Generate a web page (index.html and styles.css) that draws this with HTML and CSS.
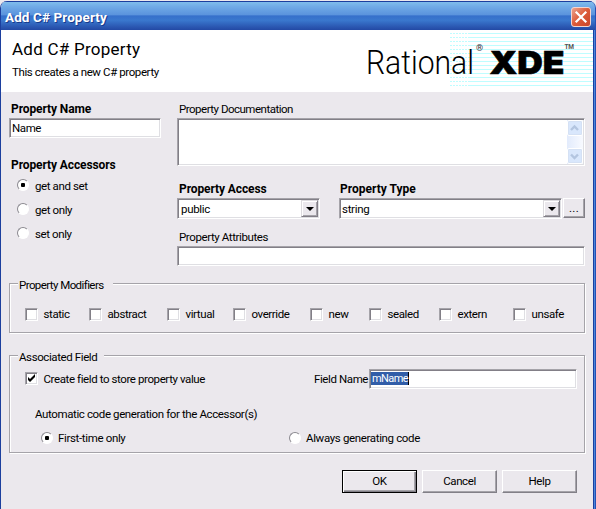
FILE: index.html
```html
<!DOCTYPE html>
<html lang="en">
<head>
<meta charset="utf-8">
<title>Add C# Property</title>
<link rel="stylesheet" href="styles.css">
</head>
<body>
<div class="window">
  <div class="titlebar">
    <span class="title">Add C# Property</span>
    <span class="close"><svg width="18" height="18" viewBox="0 0 18 18"><path d="M4.500 4.500l9 9M13.500 4.500l-9 9" stroke="#fff" stroke-width="2.200" stroke-linecap="square"/></svg></span>
  </div>
  <div class="header">
    <div class="intro">
      <div class="heading">Add C# Property</div>
      <div class="sub">This creates a new C# property</div>
    </div>
    <div class="logo">
      <svg width="230" height="62" viewBox="0 0 230 62">
        <path d="M87 3.500H105M87 7.500H105M87 11.500H105M87 15.500H105M87 19.500H105M87 23.500H105M87 27.500H105M87 31.500H105M87 35.500H105M87 39.500H105M87 43.500H105M87 47.500H105M87 51.500H105M87 55.500H105" stroke="#bffdff" stroke-dasharray="2 1"/>
        <path d="M105 3.500H230M105 7.500H230M105 11.500H230M105 15.500H230M105 19.500H230M105 23.500H230M105 27.500H230M105 31.500H230M105 35.500H230M105 39.500H230M105 43.500H230M105 47.500H230M105 51.500H230M105 55.500H230" stroke="#bffdff"/>
        <text x="3" y="44"><tspan class="rational" textLength="108" lengthAdjust="spacingAndGlyphs">Rational</tspan><tspan class="mark" x="113" y="21">®</tspan></text>
        <text class="xde" x="126.500" y="43.500" textLength="75" lengthAdjust="spacingAndGlyphs">XDE</text>
        <text class="tm" x="201.500" y="19" textLength="9" lengthAdjust="spacingAndGlyphs">TM</text>
      </svg>
    </div>
  </div>
  <div class="content">
    <div class="columns">
      <div class="left">
        <div class="label bold name-label">Property Name</div>
        <div class="field">Name</div>
        <div class="label bold acc-label">Property Accessors</div>
        <div class="radio-row"><i class="radio on"></i><span>get and set</span></div>
        <div class="radio-row"><i class="radio"></i><span>get only</span></div>
        <div class="radio-row"><i class="radio"></i><span>set only</span></div>
      </div>
      <div class="right">
        <div class="label doc-label">Property Documentation</div>
        <div class="textarea">
          <div class="scroll">
            <span class="sbtn"><svg width="15" height="16"><path d="M4 10l3.500-3.500L11 10" fill="none" stroke="#b3c5e0" stroke-width="2.400"/></svg></span>
            <span class="sbtn"><svg width="15" height="16"><path d="M4 6.500l3.500 3.500L11 6.500" fill="none" stroke="#b3c5e0" stroke-width="2.400"/></svg></span>
          </div>
        </div>
        <div class="pair">
          <div class="access">
            <div class="label bold access-label">Property Access</div>
            <div class="field combo"><span>public</span><span class="arrow"><i></i></span></div>
          </div>
          <div class="type">
            <div class="label bold type-label">Property Type</div>
            <div class="field combo"><span>string</span><span class="arrow"><i></i></span></div>
          </div>
          <div class="dots">...</div>
        </div>
        <div class="label attr-label">Property Attributes</div>
        <div class="field"></div>
      </div>
    </div>

    <div class="group modifiers">
      <div class="legend"><span class="mod-text">Property Modifiers</span></div>
      <div class="checks">
        <div class="check-row"><i class="check"></i><span>static</span></div>
        <div class="check-row"><i class="check"></i><span>abstract</span></div>
        <div class="check-row"><i class="check"></i><span>virtual</span></div>
        <div class="check-row"><i class="check"></i><span>override</span></div>
        <div class="check-row"><i class="check"></i><span>new</span></div>
        <div class="check-row"><i class="check"></i><span>sealed</span></div>
        <div class="check-row"><i class="check"></i><span>extern</span></div>
        <div class="check-row"><i class="check"></i><span>unsafe</span></div>
      </div>
    </div>

    <div class="group associated">
      <div class="legend"><span class="assoc-text">Associated Field</span></div>
      <div class="create">
        <div class="check-row"><i class="check"><svg width="9" height="9" viewBox="0 0 9 9"><path d="M1 3v3l2 2 5-5V0L3 5z" fill="#000"/></svg></i><span class="create-text">Create field to store property value</span></div>
        <span class="fname">Field Name</span>
        <div class="field fbox"><span class="selected">mName</span></div>
      </div>
      <div class="auto">Automatic code generation for the Accessor(s)</div>
      <div class="gen">
        <div class="radio-row"><i class="radio on"></i><span>First-time only</span></div>
        <div class="radio-row"><i class="radio"></i><span>Always generating code</span></div>
      </div>
    </div>

    <div class="buttons">
      <div class="button default">OK</div>
      <div class="button">Cancel</div>
      <div class="button">Help</div>
    </div>
  </div>
</div>
</body>
</html>
```
FILE: styles.css
```css
* { box-sizing: border-box; }
body {
  margin: 0;
  width: 596px;
  height: 509px;
  overflow: hidden;
  padding-top: 1px;
  background: #ebe8ed;
  font: 11.5px/14px Roboto, "Liberation Sans", sans-serif;
  letter-spacing: -0.4px;
  color: #000;
  white-space: nowrap;
}
.window {
  height: 508px;
  border-left: 1px solid #1c3f9e;
  border-right: 1px solid #2450b4;
  border-radius: 7px 7px 0 0;
  box-shadow: inset -1px 0 #4a86dc, inset -2px 0 #1c3f9e;
  padding-right: 2px;
  overflow: hidden;
}
.titlebar {
  height: 29px;
  margin-right: -2px;
  display: flex;
  align-items: center;
  justify-content: space-between;
  padding: 2px 4px 0 4px;
  border-top: 1px solid #1c3f9e;
  background: linear-gradient(#7fbdec 0, #6fa9e6 18%, #5b94dd 45%, #3670cb 50%, #3a78ce 65%, #2b58b2 88%, #2349a4 100%);
}
.title {
  color: #fff;
  font: bold 13.5px/18px Roboto, sans-serif;
  letter-spacing: 0.1px;
  text-shadow: 1px 1px #173a8c;
}
.close {
  width: 20px;
  height: 20px;
  border: 1px solid #f4d5cf;
  border-radius: 3px;
  background: linear-gradient(135deg, #eba38f, #dc5a38 50%, #c9452a);
}
.close svg { display: block; }
.header {
  height: 62px;
  background: #fff;
  display: flex;
  justify-content: space-between;
}
.intro { padding: 9px 0 0 11px; }
.heading { font-size: 17px; line-height: 20px; letter-spacing: 0.25px; }
.sub { margin-top: 6px; }
.logo svg { display: block; }
.rational { font: 300 33px Roboto, sans-serif; letter-spacing: 0; }
.xde { font: 900 32px Inter, sans-serif; letter-spacing: 0; stroke: #000; stroke-width: 0.6; }
.mark { font: 9px Roboto, sans-serif; fill: #333; }
.tm { font: bold 7px Roboto, sans-serif; fill: #555; }
.content { background: #ebe8ed; height: 417px; padding: 10px 8px 0; }
.columns { display: flex; height: 181px; }
.left { width: 168px; }
.left .field { width: 152px; }
.right { width: 408px; }
.label { height: 16px; line-height: 14px; padding-left: 2px; }
.bold { font-weight: bold; font-size: 12px; letter-spacing: -0.1px; }
.type .bold { padding-left: 1px; letter-spacing: 0; }
.field {
  height: 20px;
  padding: 0 2px;
  line-height: 18px;
  background: #fff;
  border: 1px solid;
  border-color: #a5a3a9 #fff #fff #a5a3a9;
  box-shadow: inset 1px 1px #827f87, inset -1px -1px #dfdfe3;
}
.acc-label { margin-top: 20px; }
.radio-row, .check-row { display: flex; align-items: center; }
.left .radio-row { height: 24px; padding-left: 8px; gap: 6px; }
.left .radio-row span { padding-top: 2px; }
.left .acc-label { height: 15px; }
.radio {
  flex: none;
  width: 12px;
  height: 12px;
  border-radius: 50%;
  border: 1.5px solid;
  border-color: #8b8990 #fff #fff #8b8990;
  background: #fff;
  display: flex;
}
.radio.on::after {
  content: "";
  width: 4px;
  height: 4px;
  margin: auto;
  border-radius: 1px;
  background: #000;
}
.textarea {
  height: 48px;
  background: #fff;
  border: 1px solid;
  border-color: #a5a3a9 #fff #fff #a5a3a9;
  box-shadow: inset 1px 1px #827f87, inset -1px -1px #dfdfe3;
  padding: 1px;
  display: flex;
  justify-content: flex-end;
}
.doc-label { letter-spacing: -0.5px; }
.scroll {
  width: 16px;
  display: flex;
  flex-direction: column;
  justify-content: space-between;
  background: linear-gradient(90deg, #e2ebfc, #f8faff);
}
.sbtn {
  width: 16px;
  height: 16px;
  border: 1px solid #fff;
  border-radius: 2px;
  background: #d9e7fc;
  box-shadow: 0 0 0 1px #d5e1f4 inset;
}
.sbtn svg { display: block; margin: -1px; }
.pair { display: flex; margin-top: 16px; }
.access { width: 143px; margin-right: 19px; }
.type { width: 223px; margin-right: 1px; }
.combo { display: flex; justify-content: space-between; padding: 1px; height: 21px; }
.combo > span:first-child { padding-left: 2px; letter-spacing: -0.3px; }
.type .combo > span:first-child { padding-left: 1px; }
.arrow {
  width: 17px;
  height: 17px;
  background: #ebe8ed;
  border: 1px solid;
  border-color: #dcdade #827f87 #827f87 #dcdade;
  box-shadow: inset 1px 1px #fff, inset -1px -1px #a5a3a9;
  display: flex;
}
.arrow i { margin: auto; border: 4px solid transparent; border-top-color: #000; border-bottom: 0; }
.dots {
  width: 22px;
  height: 20px;
  margin-top: 16px;
  text-align: center;
  letter-spacing: 0.3px;
  line-height: 19px;
  border: 1px solid;
  border-color: #fff #827f87 #827f87 #fff;
  box-shadow: inset -1px -1px #a5a3a9;
}
.attr-label { margin-top: 11px; }
.group {
  width: 576px;
  border: 1px solid #a5a3a9;
  box-shadow: inset 1px 1px #fff, 1px 1px #fff;
}
.modifiers { height: 50px; }
.associated { height: 98px; margin-top: 22px; }
.legend { height: 14px; margin: -6px 0 0 8px; }
.legend span { display: inline-block; background: #ebe8ed; padding-left: 1px; }
.mod-text { width: 95px; letter-spacing: -0.58px; }
.assoc-text { width: 86px; }
.checks {
  display: grid;
  grid-template-columns: 64px 78px 66px 77px 59px 70px 74px 60px;
  padding: 15px 0 0 15px;
}
.check-row { gap: 5.5px; height: 14px; }
.check {
  flex: none;
  width: 13px;
  height: 13px;
  padding: 1px;
  background: #fff;
  border: 1px solid;
  border-color: #a5a3a9 #fff #fff #a5a3a9;
  box-shadow: inset 1px 1px #827f87, inset -1px -1px #dfdfe3;
}
.check svg { display: block; }
.create { display: flex; align-items: center; height: 20px; margin-top: 5px; padding-left: 15px; }
.create .check-row { width: 289px; margin-top: -1px; }
.fname { width: 55px; }
.fbox { width: 208px; padding: 2px 1px; }
.selected { display: block; width: 38px; height: 13px; line-height: 13px; font-size: 11px; letter-spacing: -0.6px; background: #315da8; color: #fff; padding-left: 1px; border-right: 1px solid #000; }
.auto { margin: 18px 0 0 25px; letter-spacing: -0.38px; }
.gen { display: grid; grid-template-columns: 248px auto; margin-top: 10px; padding-left: 31px; }
.gen .radio-row { gap: 5px; height: 14px; letter-spacing: -0.35px; }
.buttons { display: flex; gap: 5px; margin: 17px 0 0 333px; }
.button {
  width: 75px;
  height: 23px;
  line-height: 20px;
  text-align: center;
  border: 1px solid;
  border-color: #fff #827f87 #827f87 #fff;
  box-shadow: inset -1px -1px #a5a3a9;
}
.button.default {
  border-color: #000;
  box-shadow: inset 1px 1px #fff, inset -1px -1px #827f87, inset -2px -2px #a5a3a9;
}
```
